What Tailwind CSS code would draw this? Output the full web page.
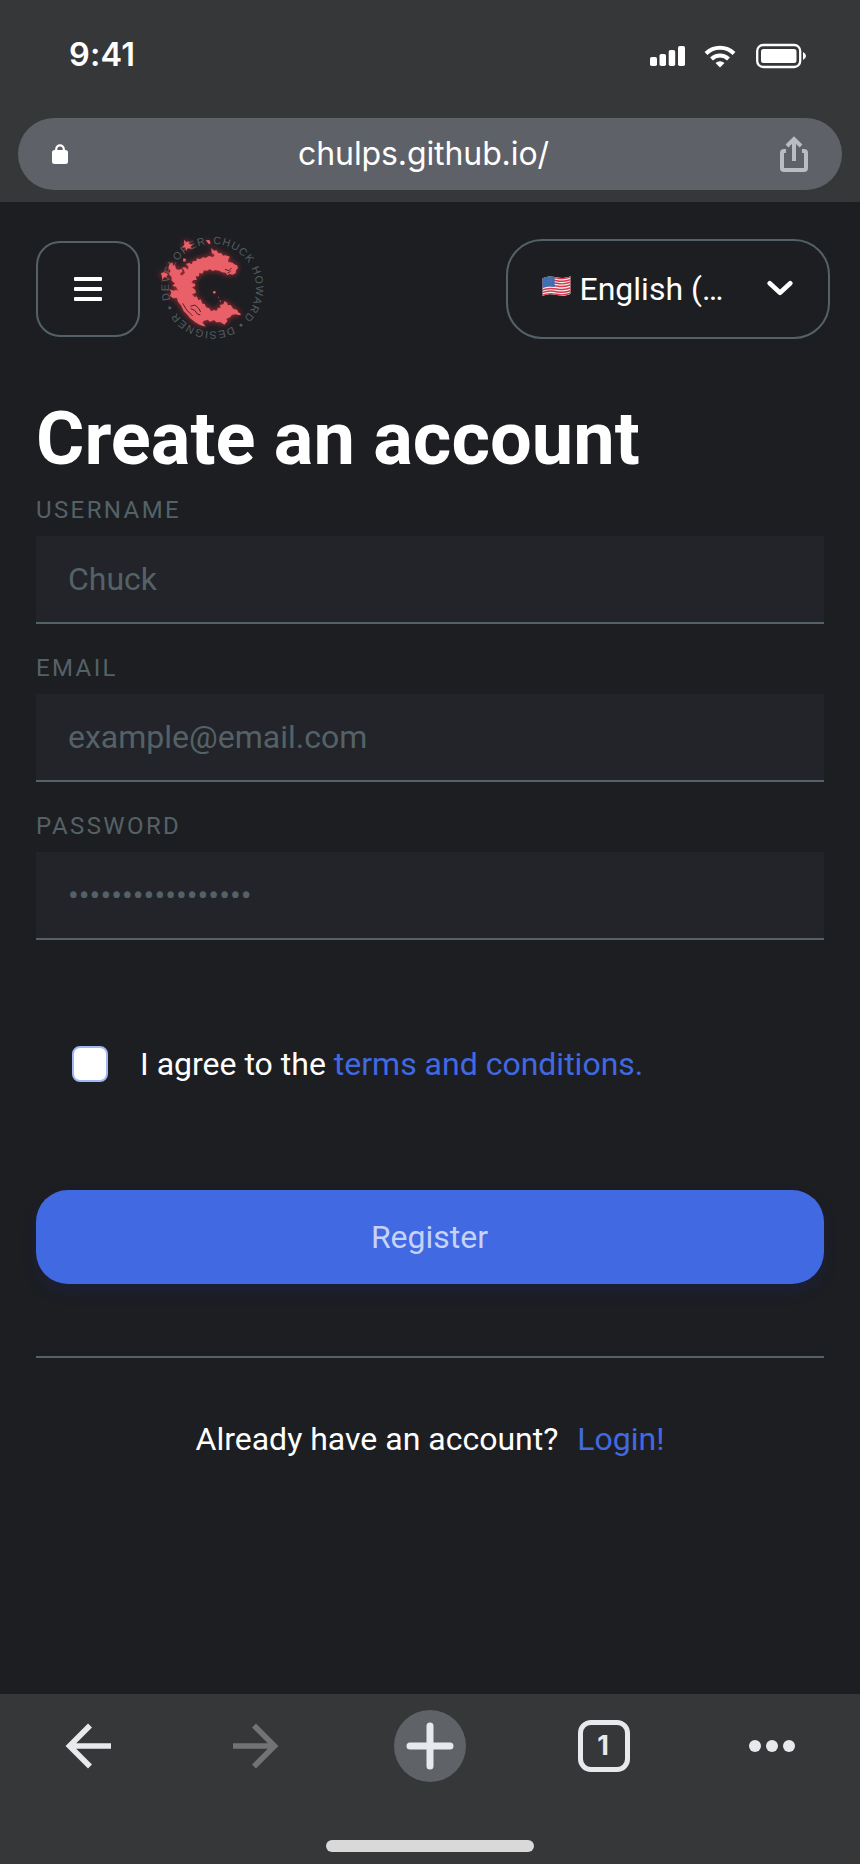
<!DOCTYPE html>
<html lang="en">
<head>
<meta charset="utf-8">
<title>Create an account</title>
<script src="https://cdn.jsdelivr.net/npm/@tailwindcss/browser@4"></script>
</head>
<body class="bg-[#1d1e22]">
<div class="flex h-[1864px] w-[860px] flex-col overflow-hidden bg-[#1d1e22] font-['Roboto',sans-serif] text-[32px] leading-10 text-white">

  <!-- status bar and address bar -->
  <header class="h-[202px] shrink-0 bg-[#363739] px-[18px]">
    <div class="flex h-[118px] items-center justify-between pr-[36px] pl-[51px]">
      <span class="pb-[8px] font-['Inter',sans-serif] text-[32.5px] leading-10 font-semibold tracking-[0.2px]">9:41</span>
      <svg class="mb-[6px]" width="156" height="26" viewBox="0 0 156 26" fill="#fff">
        <rect x="0" y="14" width="7" height="9" rx="1.8"/><rect x="9.500" y="11" width="6.500" height="12" rx="1.8"/><rect x="18.700" y="7" width="6.500" height="16" rx="1.800"/><rect x="28" y="3" width="7" height="20" rx="1.800"/>
        <g fill="none" stroke="#fff" stroke-width="4"><path d="M56 10.500a19.800 19.800 0 0 1 28 0"/><path d="M61.500 16a12 12 0 0 1 17 0"/></g>
        <path d="M70 24.500l-4.500-4.600a6.600 6.600 0 0 1 9 0z"/>
        <rect x="107.200" y="2" width="43" height="22" rx="6" fill="none" stroke="#fff" stroke-width="2.300"/><rect x="111" y="6" width="35.500" height="14" rx="2.500"/><path d="M153 9q3 1.500 3 4t-3 4z"/>
      </svg>
    </div>
    <div class="flex h-[72px] items-center rounded-full bg-[#5f6168] px-[34px]">
      <svg width="16" height="20" viewBox="0 0 16 20" fill="#fff"><rect y="6" width="16" height="14" rx="2.500"/><path d="M4.200 8V5.200a3.800 3.800 0 0 1 7.600 0V8" fill="none" stroke="#fff" stroke-width="2.200"/></svg>
      <span class="flex-1 pr-px text-center font-['Inter',sans-serif] text-[32px] leading-10 tracking-[-0.1px]">chulps.github.io/</span>
      <svg width="28" height="36" viewBox="0 0 28 36" fill="none" stroke="#b9bcc5" stroke-width="4"><path d="M6 15H4a2 2 0 0 0-2 2v15a2 2 0 0 0 2 2h20a2 2 0 0 0 2-2V17a2 2 0 0 0-2-2h-2M14 25V4M7 10l7-7 7 7"/></svg>
    </div>
  </header>

  <!-- page -->
  <main class="flex-1 px-[36px]">
    <nav class="-mr-[6px] flex h-[174px] items-center">
      <button class="flex h-[96px] w-[104px] flex-col items-center justify-center gap-[6px] rounded-[24px] border-2 border-[#546267]">
        <span class="h-1 w-7 rounded-[1px] bg-white"></span><span class="h-1 w-7 rounded-[1px] bg-white"></span><span class="h-1 w-7 rounded-[1px] bg-white"></span>
      </button>
      <svg class="mb-[4px] ml-[16px] overflow-visible" width="112" height="114" viewBox="0 0 336 342">
        <defs>
          <path id="ring" d="M169 42a131 131 0 0 1 0 262a131 131 0 0 1 0-262"/>
          <filter id="glow" x="-30%" y="-30%" width="160%" height="160%"><feDropShadow dx="0" dy="0" stdDeviation="9" flood-color="#f0303c" flood-opacity=".75"/></filter>
        </defs>
        <text font-family="Liberation Sans, sans-serif" font-size="32" fill="#525e63"><textPath href="#ring" startOffset="2" textLength="800">CHUCK HOWARD • DESIGNER • DEVELOPER</textPath></text>
        <g filter="url(#glow)" fill="#ea6068">
          <path d="M166 54L174 62 181 61 187 70 196 70 201 77 208 76 222 80 217 88 216 96 230 98 234 103 243 106 246 113 240 121 239 130 229 134 221 131 214 136 209 128 198 127 190 122 178 120 170 123 161 117 154 122 144 121 139 131 130 128 129 139 119 139 122 150 112 150 106 158 118 162 117 169 108 172 118 180 120 188 108 193 116 202 122 199 127 211 134 208 139 221 146 222 150 232 160 235 165 244 174 240 181 243 187 233 194 234 192 225 202 223 206 213 214 219 215 226 224 225 232 237 243 239 247 247 256 253 249 256 240 253 228 254 222 262 211 266 214 274 205 284 193 276 181 277 174 270 162 275 155 269 144 272 139 277 149 290 132 285 117 276 103 265 93 253 83 243 76 227 66 215 63 203 52 205 42 198 46 187 40 177 52 182 61 180 67 184 60 170 49 168 57 160 47 152 47 141 39 133 44 123 37 113 41 102 49 97 51 109 57 105 60 117 68 120 76 116 80 124 71 132 78 137 87 128 83 119 77 113 88 112 95 119 98 110 90 102 99 99 108 103 110 94 121 93 123 85 132 88 141 82 149 84 159 78 171 82 176 75 167 69z"/>
          <path d="M84 29L91 37 99 33 98 42 110 44 103 50 105 56 95 55 91 63 88 52 79 53 85 44zM149 31L160 30 164 40 159 43zM15 129L25 127 36 133 31 141 24 142 19 151 18 140zM82 85l8 2-2 8-7-1z"/>
          <circle cx="175" cy="187" r="4"/><circle cx="188" cy="202" r="1.500"/><circle cx="193" cy="213" r="2"/>
        </g>
        <g fill="none" stroke="#571f2a" stroke-width="3"><path d="M103 229L117 225 128 235 134 246M104 236L116 241 124 252 133 255M207 118L219 122 227 114M80 220L92 240 110 258M214 130L224 124"/></g>
      </svg>
      <button class="ml-auto flex h-[100px] w-[324px] items-center rounded-[36px] border-2 border-[#546267] pr-[35px] pl-[34px]">
        <svg class="mb-[6px] shrink-0" width="29" height="22" viewBox="0 0 87 66">
          <defs><clipPath id="flag"><path d="M1 10C18 3 28 4 44 7s28 3 42-4V56c-14 8-27 7-42 4S18 57 1 63z"/></clipPath></defs>
          <g clip-path="url(#flag)"><rect width="87" height="66" fill="#f4efef"/>
            <g fill="none" stroke="#d6384b" stroke-width="4.400"><path d="M0 12C18 5 28 6 44 9s28 3 43-4"/><path d="M0 20C18 13 28 14 44 17s28 3 43-4"/><path d="M0 28C18 21 28 22 44 25s28 3 43-4"/><path d="M0 36C18 29 28 30 44 33s28 3 43-4"/><path d="M0 45C18 38 28 39 44 42s28 3 43-4"/><path d="M0 53C18 46 28 47 44 50s28 3 43-4"/><path d="M0 61C18 54 28 55 44 58s28 3 43-4"/></g>
            <path d="M0 10C16 3 26 3 38 6V36C26 33 14 34 0 39z" fill="#3c6db0"/>
            <path d="M5 14q14-6 30-4M5 20q14-6 30-4M5 26q14-6 30-4M5 32q14-6 30-4" fill="none" stroke="#7f9fd0" stroke-width="1.600" stroke-dasharray="2 4"/></g>
        </svg>
        <span class="ml-[8.500px]">English (…</span>
        <svg class="mb-[2px] ml-auto" width="26" height="16" viewBox="0 0 26 16" fill="none" stroke="#fff" stroke-width="4.600" stroke-linecap="round" stroke-linejoin="round"><path d="M2.700 3.200L13 12.800 23.300 3.200"/></svg>
      </button>
    </nav>

    <h1 class="mt-[23px] text-[74px] leading-[80px] font-bold">Create an account</h1>

    <div class="mt-[15px] text-[24px] leading-8 tracking-[2.4px] text-[#546267]">USERNAME</div>
    <div class="mt-[10px] flex h-[88px] items-center border-b-2 border-[#546267] bg-[#232429] px-8 text-[#546267]">Chuck</div>
    <div class="mt-[28px] text-[24px] leading-8 tracking-[2.4px] text-[#546267]">EMAIL</div>
    <div class="mt-[10px] flex h-[88px] items-center border-b-2 border-[#546267] bg-[#232429] px-8 text-[#546267]">example@email.com</div>
    <div class="mt-[28px] text-[24px] leading-8 tracking-[2.4px] text-[#546267]">PASSWORD</div>
    <div class="mt-[10px] flex h-[88px] items-center border-b-2 border-[#546267] bg-[#232429] px-8 pb-px text-[#546267]">•••••••••••••••••</div>

    <label class="mt-[106px] flex h-9 items-center pl-9">
      <span class="size-9 rounded-[8px] border-2 border-[#a3b7f5] bg-white"></span>
      <span class="ml-8">I agree to the <a class="text-[#4169e1]">terms and conditions.</a></span>
    </label>

    <button class="mt-[108px] block h-[94px] w-full rounded-[32px] bg-[#4169e1] pr-px text-center text-[#c6d2f6] shadow-[0_8px_16px_rgba(20,40,160,0.14)]">Register</button>

    <div class="mt-[72px] h-0.5 bg-[#546267]"></div>
    <p class="mt-[61px] flex justify-center gap-[19px]"><span>Already have an account?</span><a class="text-[#4169e1]">Login!</a></p>
  </main>

  <!-- browser toolbar -->
  <footer class="flex h-[170px] shrink-0 flex-col items-center bg-[#363739]">
    <div class="flex h-[104px] w-full items-center px-[65px]">
      <svg width="46" height="46" viewBox="0 0 46 46" fill="none" stroke="#e8e9ed" stroke-width="5.600"><path d="M25 2.500L4.500 23 25 43.500M5 23H46"/></svg>
      <svg class="ml-[122px]" width="46" height="46" viewBox="0 0 46 46" fill="none" stroke="#727375" stroke-width="5.600"><path d="M21 2.500L41.500 23 21 43.500M41 23H0"/></svg>
      <div class="ml-[115px] flex size-[72px] items-center justify-center rounded-full bg-[#5f6267]">
        <svg width="48" height="48" viewBox="0 0 48 48" stroke="#e8e9ed" stroke-width="7" stroke-linecap="round"><path d="M4 24H44M24 4V44"/></svg>
      </div>
      <div class="ml-[112px] flex size-[52px] items-center justify-center rounded-[13px] border-[5.5px] border-[#e8e9ed] pr-[2px] font-['Inter',sans-serif] text-[27px] font-bold text-[#e8e9ed]">1</div>
      <svg class="ml-[119px]" width="46" height="12" viewBox="0 0 46 12" fill="#e8e9ed"><circle cx="6" cy="6" r="6"/><circle cx="23" cy="6" r="6"/><circle cx="40" cy="6" r="6"/></svg>
    </div>
    <div class="mt-[42px] h-3 w-[208px] rounded-full bg-[#d9d9d9]"></div>
  </footer>
</div>
</body>
</html>
